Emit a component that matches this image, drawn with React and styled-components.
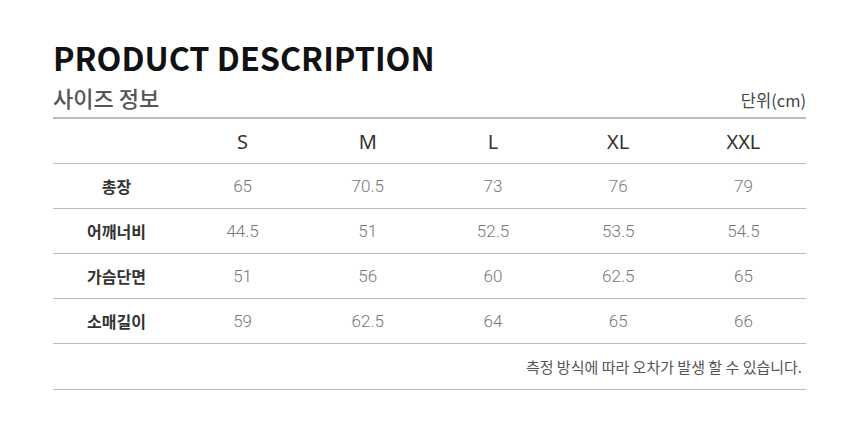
import styled, { createGlobalStyle } from "styled-components";

const GlobalStyle = createGlobalStyle`
  body {
    margin: 0;
    background: #ffffff;
    font-family: "Noto Sans CJK KR", "Noto Sans", sans-serif;
  }
`;

const sizes = ["S", "M", "L", "XL", "XXL"];

const rows = [
  { label: "총장", values: ["65", "70.5", "73", "76", "79"] },
  { label: "어깨너비", values: ["44.5", "51", "52.5", "53.5", "54.5"] },
  { label: "가슴단면", values: ["51", "56", "60", "62.5", "65"] },
  { label: "소매길이", values: ["59", "62.5", "64", "65", "66"] },
];

function App() {
  return (
    <>
      <GlobalStyle />
      <Page>
        <Title>PRODUCT DESCRIPTION</Title>
        <SubHeader>
          <SubTitle>사이즈 정보</SubTitle>
          <Unit>단위(cm)</Unit>
        </SubHeader>
        <Table>
          <Row>
            <LabelCell />
            {sizes.map((s) => (
              <SizeCell key={s}>{s}</SizeCell>
            ))}
          </Row>
          {rows.map((r) => (
            <Row key={r.label}>
              <LabelCell>{r.label}</LabelCell>
              {r.values.map((v, i) => (
                <ValueCell key={i}>{v}</ValueCell>
              ))}
            </Row>
          ))}
          <Note>측정 방식에 따라 오차가 발생 할 수 있습니다.</Note>
        </Table>
      </Page>
    </>
  );
}

export default App;

const Page = styled.div`
  width: 753px;
  padding: 36px 0 0 53px;
`;

const Title = styled.h1`
  margin: 0;
  font-size: 32.3px;
  font-weight: 700;
  color: #111;
  line-height: 42px;
`;

const SubHeader = styled.div`
  display: flex;
  justify-content: space-between;
  align-items: flex-end;
  height: 39px;
  border-bottom: 2px solid #bdbdbd;
`;

const SubTitle = styled.h2`
  margin: 0 0 5px;
  font-size: 22px;
  font-weight: 500;
  color: #555;
  line-height: 30px;
`;

const Unit = styled.span`
  margin: 0 0 6px;
  font-size: 16.5px;
  color: #444;
  line-height: 22px;
`;

const Table = styled.div`
  display: flex;
  flex-direction: column;
`;

const Row = styled.div`
  display: grid;
  grid-template-columns: 127px repeat(5, 1fr);
  height: 44px;
  align-items: center;
  border-bottom: 1px solid #bdbdbd;
`;

const LabelCell = styled.div`
  text-align: center;
  font-size: 16px;
  font-weight: 700;
  color: #333;
`;

const SizeCell = styled.div`
  text-align: center;
  font-family: "Noto Sans", "Open Sans", sans-serif;
  font-size: 20px;
  font-weight: 400;
  color: #333;
`;

const ValueCell = styled.div`
  text-align: center;
  font-family: "Roboto", "Liberation Sans", sans-serif;
  font-weight: 300;
  font-size: 17px;
  color: #777;
`;

const Note = styled.div`
  height: 45px;
  display: flex;
  align-items: center;
  justify-content: flex-end;
  padding-right: 4px;
  font-size: 15px;
  color: #555;
  border-bottom: 1px solid #bdbdbd;
`;
